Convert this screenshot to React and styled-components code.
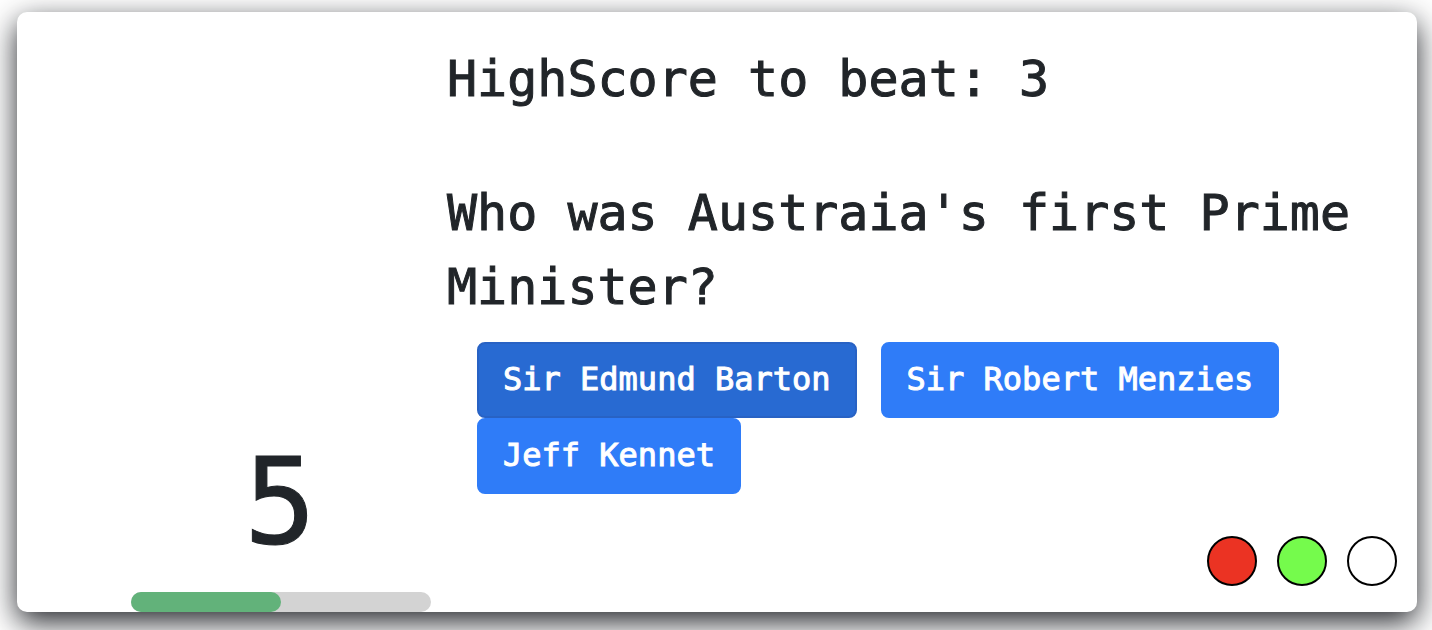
import React from "react";
import styled, { createGlobalStyle } from "styled-components";

const Global = createGlobalStyle`
  *, *::before, *::after { box-sizing: border-box; }
  body {
    margin: 0;
    background: #fff;
    color: #212529;
    font-family: Menlo, "DejaVu Sans Mono", monospace;
  }
`;

const Page = styled.div`
  min-height: 100vh;
  padding: 12px 15px 18px 17px;
  display: flex;
  overflow: hidden;
`;

const Card = styled.main`
  flex: 1;
  display: grid;
  grid-template-columns: 430px 1fr;
  background: #fff;
  border-radius: 10px;
  box-shadow: 0 10px 30px rgba(6, 8, 14, 0.88);
`;

const TimerColumn = styled.section`
  display: flex;
  flex-direction: column;
  justify-content: flex-end;
  padding-left: 114px;
`;

const Count = styled.div`
  width: 300px;
  font-size: 120px;
  line-height: 144px;
  padding: 0 2px 18px 0;
  text-align: center;
  -webkit-text-stroke: 1px currentColor;
`;

const Track = styled.div`
  width: 300px;
  height: 20px;
  border-radius: 10px;
  background: #d3d3d3;
`;

const Fill = styled.div`
  height: 100%;
  border-radius: 10px;
  background: #62b27a;
`;

const QuizColumn = styled.section`
  display: flex;
  flex-direction: column;
  padding: 30px 20px 26px 0;
`;

const Heading = styled.h1`
  margin: 0 0 60px;
  font-size: 50px;
  font-weight: 400;
  line-height: 74px;
  -webkit-text-stroke: 1px currentColor;
`;

const Question = styled.h2`
  margin: 0;
  font-size: 50px;
  font-weight: 400;
  line-height: 74px;
  -webkit-text-stroke: 1px currentColor;
`;

const Answers = styled.div`
  display: flex;
  flex-wrap: wrap;
  column-gap: 24px;
  padding: 18px 0 0 30px;
`;

const Answer = styled.button`
  height: 76px;
  padding: 0 24px 2px;
  border: 2px solid ${(p) => (p.$active ? "#2862c4" : "#2f7cf8")};
  border-radius: 8px;
  background: ${(p) => (p.$active ? "#286ad2" : "#2f7cf8")};
  color: #fff;
  font: 32px/48px Menlo, "DejaVu Sans Mono", monospace;
  -webkit-text-stroke: 1px currentColor;
  cursor: pointer;
`;

const Results = styled.div`
  display: flex;
  justify-content: flex-end;
  gap: 20px;
  margin-top: auto;
`;

const Dot = styled.span`
  width: 50px;
  height: 50px;
  border: 2px solid #000;
  border-radius: 50%;
  background: ${(p) => p.$color};
`;

const answers = ["Sir Edmund Barton", "Sir Robert Menzies", "Jeff Kennet"];
const results = ["#eb3323", "#75fb4c", "#fff"];

export default function App() {
  const [selected, setSelected] = React.useState(0);
  return (
    <>
      <Global />
      <Page>
        <Card>
          <TimerColumn>
            <Count>5</Count>
            <Track>
              <Fill style={{ width: `${(5 / 10) * 100}%` }} />
            </Track>
          </TimerColumn>
          <QuizColumn>
            <Heading>HighScore to beat: 3</Heading>
            <Question>Who was Austraia's first Prime Minister?</Question>
            <Answers>
              {answers.map((text, i) => (
                <Answer key={text} type="button" $active={i === selected} onClick={() => setSelected(i)}>
                  {text}
                </Answer>
              ))}
            </Answers>
            <Results>
              {results.map((color) => (
                <Dot key={color} $color={color} />
              ))}
            </Results>
          </QuizColumn>
        </Card>
      </Page>
    </>
  );
}
